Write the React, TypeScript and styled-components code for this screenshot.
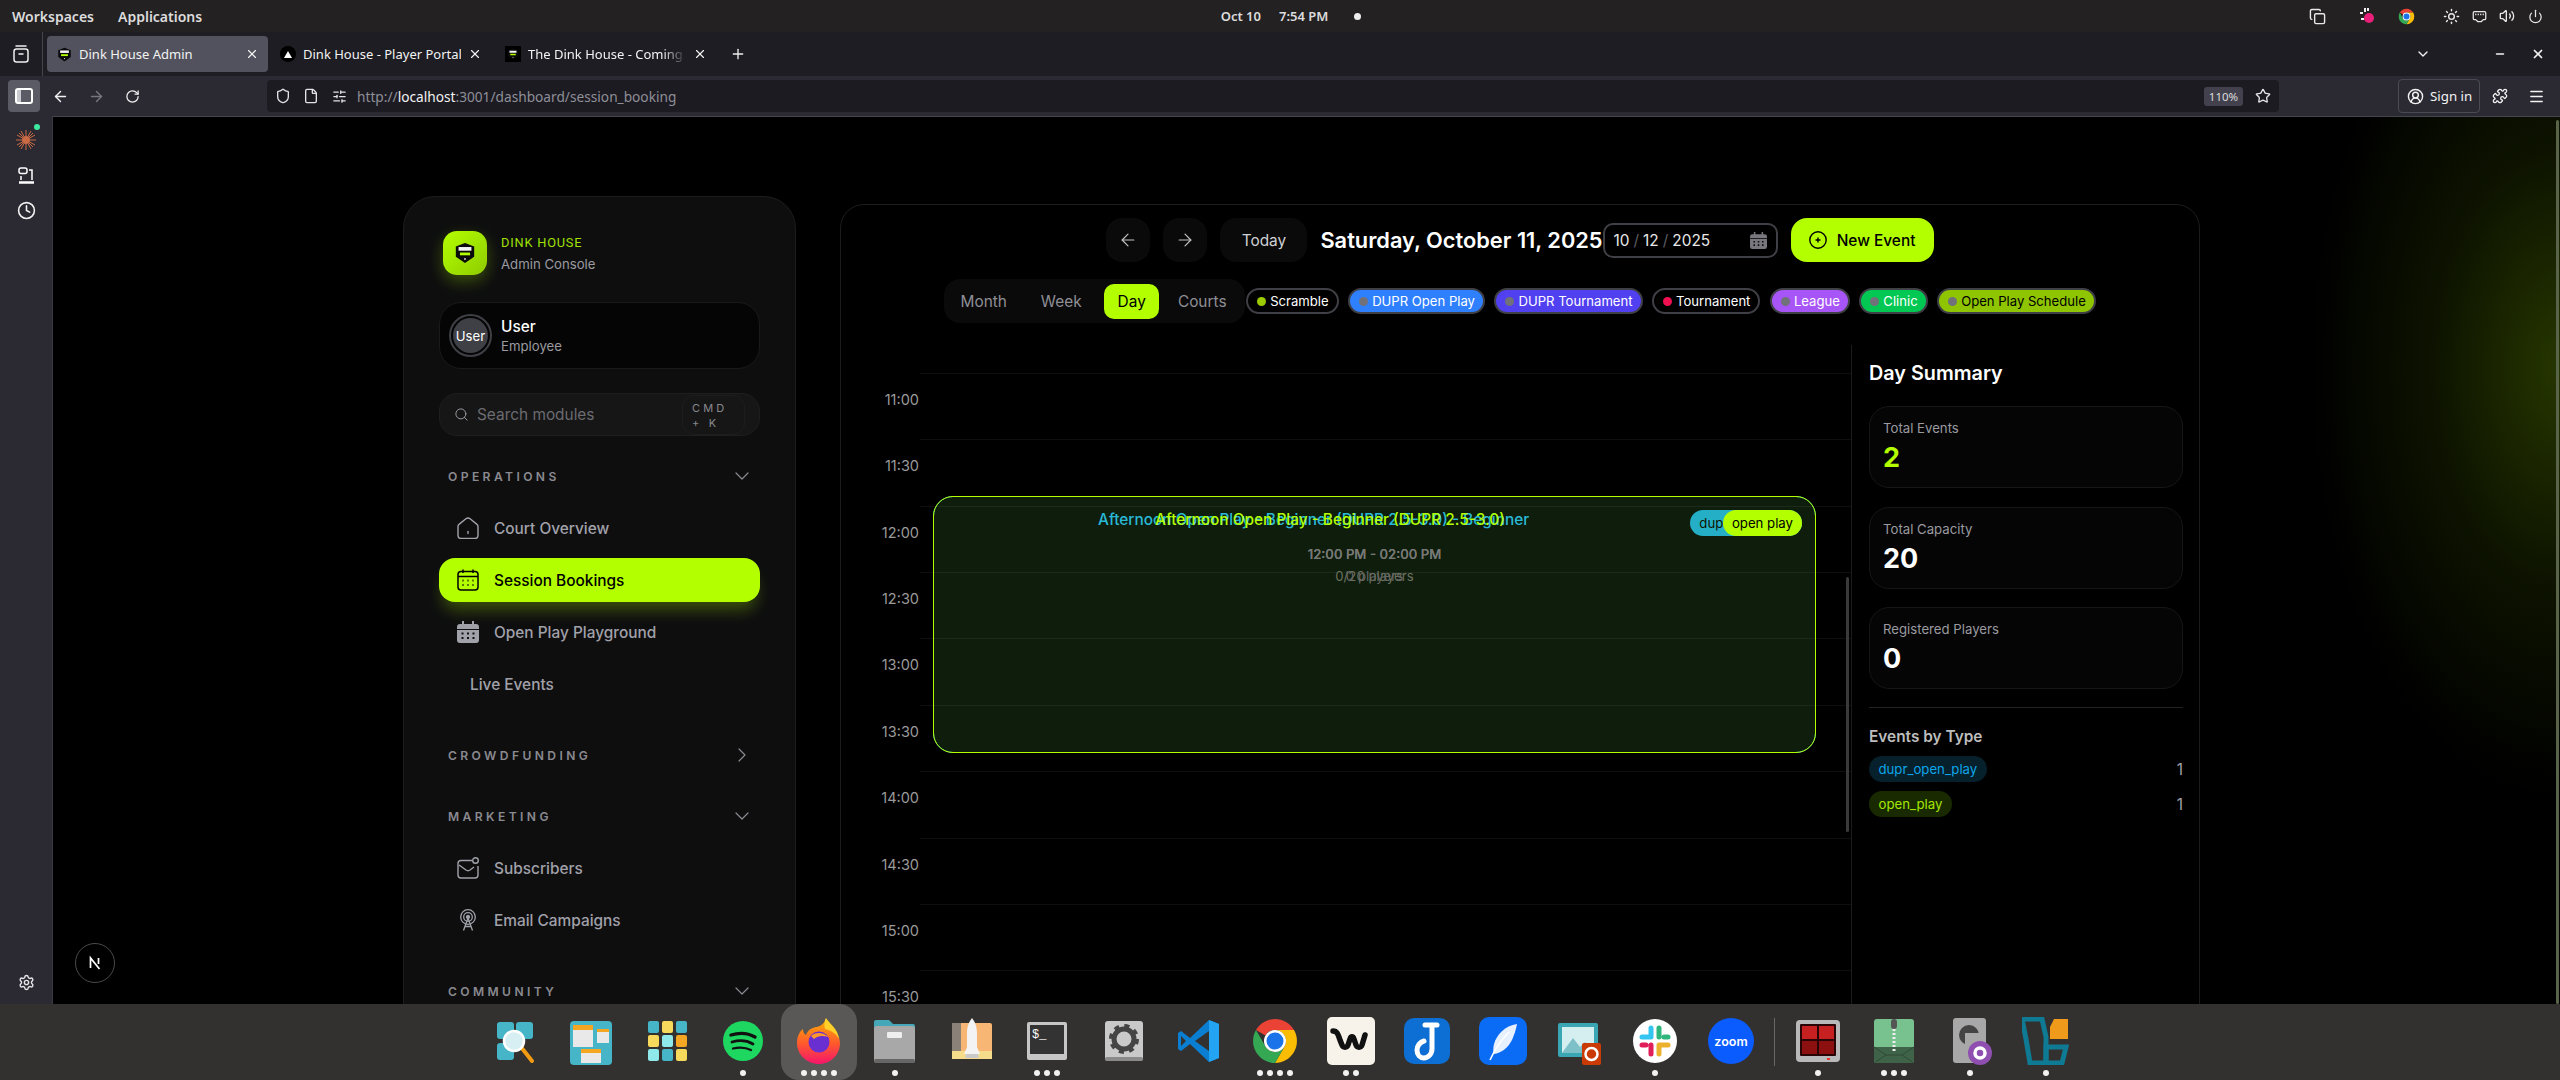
import React from 'react'
import styled, { createGlobalStyle } from 'styled-components'
import {
  ArrowLeft,
  ArrowRight,
  ChevronDown,
  ChevronRight,
  CircleUserRound,
  Clock,
  Copy,
  EthernetPort,
  File,
  Menu,
  Minus,
  Plus,
  Power,
  Puzzle,
  RotateCw,
  Search,
  Settings,
  Shield,
  SlidersHorizontal,
  Star,
  Sun,
  Volume2,
  X,
} from 'lucide-react'

const LIME = '#b3ff00'

const GlobalStyle = createGlobalStyle`
  html, body {
    margin: 0;
    padding: 0;
    background: #000;
    overflow: hidden;
  }
  * {
    box-sizing: border-box;
  }
`

/* ---------- small drawings ---------- */

const LogoMark = ({ size = 22 }: { size?: number }) => (
  <svg width={size} height={size} viewBox="0 0 24 24">
    <path d="M12 1l10 4v11l-10 7-10-7V5z" fill="#0b0b0b" />
    <rect x="5" y="5.500" width="14" height="4" fill="#f4f4f4" />
    <rect x="6.500" y="11.500" width="11" height="3" fill={LIME} />
    <circle cx="12" cy="18.500" r="1" fill="#ddd" />
  </svg>
)

const HouseIcon = () => (
  <svg width="22" height="22" viewBox="0 0 22 22" fill="none" stroke="#a1a1aa" strokeWidth="1.4">
    <path d="M1 9.500c0-1 .5-1.800 1.300-2.400l6.600-5.300c1.200-1 3-1 4.200 0l6.600 5.300c.8.600 1.300 1.400 1.300 2.400v9c0 1.700-1.300 3-3 3H4c-1.700 0-3-1.300-3-3z" />
    <path d="M11 14.500v2" strokeLinecap="round" />
  </svg>
)

const CalendarOutline = () => (
  <svg width="22" height="22" viewBox="0 0 22 22" fill="none" stroke="#000" strokeWidth="1.500">
    <rect x="1" y="2.500" width="20" height="18.500" rx="3" />
    <path d="M1 7.500h20M6 .500v3.500M16 .500v3.500" />
    <path d="M5.500 11.500h1M10.500 11.500h1M15.500 11.500h1M5.500 16h1M10.500 16h1M15.500 16h1" strokeWidth="2" />
  </svg>
)

const CalendarFilled = ({ size = 22, color = '#a1a1aa' }: { size?: number; color?: string }) => (
  <svg width={size} height={size} viewBox="0 0 22 22">
    <path d="M5 0h2v3h8V0h2v3h2a3 3 0 0 1 3 3v2H0V6a3 3 0 0 1 3-3h2z" fill={color} />
    <path d="M0 9h22v10a3 3 0 0 1-3 3H3a3 3 0 0 1-3-3z" fill={color} />
    <path d="M4.500 12.500h2M10 12.500h2M15.500 12.500h2M4.500 17h2M10 17h2M15.500 17h2" stroke="#0e0e0f" strokeWidth="2" />
  </svg>
)

const MailBadgeIcon = () => (
  <svg width="22" height="22" viewBox="0 0 22 22" fill="none" stroke="#a1a1aa" strokeWidth="1.4">
    <path d="M15 3.500H4a3 3 0 0 0-3 3V18a3 3 0 0 0 3 3h14a3 3 0 0 0 3-3V9" />
    <path d="M2 8l7 5c1.200.8 2.800.8 4 0l4-3" />
    <circle cx="18.500" cy="3.500" r="2.800" />
  </svg>
)

const AntennaIcon = () => (
  <svg width="22" height="22" viewBox="0 0 22 22" fill="none" stroke="#a1a1aa" strokeWidth="1.300">
    <circle cx="11" cy="8" r="7.300" />
    <circle cx="11" cy="8" r="4.300" />
    <circle cx="11" cy="8" r="1.500" fill="#a1a1aa" />
    <path d="M11 9l-4.500 12.500M11 9l4.500 12.500M8 17.500h6" />
  </svg>
)

const ChromeIcon = ({ size = 48 }: { size?: number }) => (
  <svg width={size} height={size} viewBox="0 0 48 48">
    <path d="M5 13A22 22 0 0 1 43 13H24A11 11 0 0 0 14.500 18.500z" fill="#ea4335" />
    <path d="M43 13A22 22 0 0 1 24 46L33.500 29.500A11 11 0 0 0 24 13z" fill="#fbbc04" />
    <path d="M24 46A22 22 0 0 1 5 13L14.500 29.500A11 11 0 0 0 33.500 29.500z" fill="#34a853" />
    <circle cx="24" cy="24" r="11" fill="#fff" />
    <circle cx="24" cy="24" r="8.500" fill="#1a73e8" />
  </svg>
)

const NextLogo = () => (
  <svg width="16" height="16" viewBox="0 0 16 16" fill="none" stroke="#fff" strokeWidth="1.700">
    <path d="M3.500 13V3l9 11" />
    <path d="M11.500 3v6" />
  </svg>
)

/* ---------- dock drawings ---------- */

const DockSvg = ({ children }: { children: React.ReactNode }) => (
  <svg width="48" height="48" viewBox="0 0 48 48">
    {children}
  </svg>
)

const dockIcons: { key: string; dots: number; art: React.ReactNode }[] = [
  {
    key: 'finder',
    dots: 0,
    art: (
      <DockSvg>
        <rect x="6" y="5" width="17" height="17" rx="3" fill="#45b5c7" />
        <rect x="25" y="5" width="17" height="17" rx="3" fill="#45b5c7" />
        <rect x="6" y="26" width="17" height="17" rx="3" fill="#45b5c7" />
        <path d="M30 30l11 14" stroke="#f39c12" strokeWidth="4" strokeLinecap="round" />
        <circle cx="23" cy="24" r="10" fill="#d7eef2" stroke="#fff" strokeWidth="2.500" />
      </DockSvg>
    ),
  },
  {
    key: 'board',
    dots: 0,
    art: (
      <DockSvg>
        <rect x="3" y="4" width="42" height="44" rx="4" fill="#45b5c7" />
        <rect x="6" y="8" width="20" height="22" fill="#e9e9e9" />
        <rect x="6" y="8" width="20" height="5" fill="#f5a623" />
        <rect x="30" y="12" width="12" height="14" fill="#e9e9e9" />
        <rect x="30" y="12" width="12" height="3" fill="#f5a623" />
        <rect x="14" y="32" width="20" height="14" fill="#e9e9e9" />
        <rect x="14" y="32" width="20" height="4" fill="#f5a623" />
      </DockSvg>
    ),
  },
  {
    key: 'apps',
    dots: 0,
    art: (
      <DockSvg>
        {['#45b5c7', '#f7d95c', '#45b5c7', '#f7d95c', '#8fe9ea', '#f5a623', '#8fe9ea', '#45b5c7', '#f7d95c'].map((c, i) => (
          <rect key={i} x={5 + (i % 3) * 14} y={4 + Math.floor(i / 3) * 14} width="11" height="12" rx="2" fill={c} />
        ))}
      </DockSvg>
    ),
  },
  {
    key: 'spotify',
    dots: 1,
    art: (
      <DockSvg>
        <circle cx="24" cy="24" r="20" fill="#1ed760" />
        <g fill="none" stroke="#111" strokeLinecap="round">
          <path d="M12 18c8-2.500 17-2 24 2" strokeWidth="3.400" />
          <path d="M13 25c7-2 15-1.500 21 2" strokeWidth="2.800" />
          <path d="M14 31.500c6-1.500 13-1 18 1.500" strokeWidth="2.300" />
        </g>
      </DockSvg>
    ),
  },
  {
    key: 'firefox',
    dots: 4,
    art: (
      <DockSvg>
        <defs>
          <linearGradient id="ff" x1="0" y1="0" x2="0" y2="1">
            <stop offset="0" stopColor="#ffb300" />
            <stop offset="0.55" stopColor="#ff5a2c" />
            <stop offset="1" stopColor="#f5156c" />
          </linearGradient>
        </defs>
        <path d="M31 1c-1 7 14 12 14 25 0 12-9.500 21-21 21S2 38 2 26C2 19 5 14 8 12c0 3 1 5 3 6 2-6 8-8 11-8 4-1 8-4 9-9z" fill="url(#ff)" />
        <path d="M31 1c4 6 12 11 13 21-3-6-9-9-14-10-1-4-1-7 1-11z" fill="#ffd02a" />
        <circle cx="24" cy="25" r="10.500" fill="#6a2fd0" />
        <path d="M16 19c4-4 13-4 17 1-5-2-11-1-14 2z" fill="#ff9a2a" />
      </DockSvg>
    ),
  },
  {
    key: 'files',
    dots: 1,
    art: (
      <DockSvg>
        <path d="M3 5a2 2 0 0 1 2-2h13l4 4h20a2 2 0 0 1 2 2v3H3z" fill="#45a8b8" />
        <rect x="3" y="9" width="41" height="37" rx="3" fill="#a8a8a8" />
        <rect x="3" y="42" width="41" height="4" rx="2" fill="#666" />
        <rect x="16" y="15" width="15" height="6" rx="1" fill="#eee" />
      </DockSvg>
    ),
  },
  {
    key: 'rocket',
    dots: 0,
    art: (
      <DockSvg>
        <rect x="5" y="6" width="40" height="36" rx="2" fill="#f7b673" />
        <rect x="5" y="6" width="9" height="36" fill="#8a8178" />
        <rect x="5" y="34" width="40" height="8" fill="#f5dc8a" />
        <path d="M25 1c4 5 5 10 5 16v13l3 7H17l3-7V17c0-6 1-11 5-16z" fill="#f3f3f3" />
        <path d="M19 37h12l1 4H18z" fill="#c9c9c9" />
      </DockSvg>
    ),
  },
  {
    key: 'terminal',
    dots: 3,
    art: (
      <DockSvg>
        <rect x="4" y="5" width="40" height="38" rx="2" fill="#c6c6c6" />
        <rect x="7" y="8" width="34" height="29" fill="#333" />
        <text x="9" y="21" fontFamily="'Liberation Mono', monospace" fontSize="12" fill="#fff">$_</text>
      </DockSvg>
    ),
  },
  {
    key: 'settings',
    dots: 0,
    art: (
      <DockSvg>
        <rect x="6" y="4" width="38" height="40" rx="3" fill="#c9c9c9" />
        <rect x="6" y="40" width="38" height="4" rx="2" fill="#8a8a8a" />
        <circle cx="25" cy="22" r="10" fill="none" stroke="#444" strokeWidth="5" />
        <circle cx="25" cy="22" r="13" fill="none" stroke="#444" strokeWidth="4" strokeDasharray="5 5.200" />
      </DockSvg>
    ),
  },
  {
    key: 'vscode',
    dots: 0,
    art: (
      <DockSvg>
        <path d="M34 3L15 21 6 14l-3 2v16l3 2 9-7 19 18 10-4V7z" fill="#0a7fd1" />
        <path d="M34 3l10 4v34l-10 4z" fill="#22a4f2" />
        <path d="M34 14v20L20 24z" fill="#333030" />
        <path d="M6 19l5 5-5 5z" fill="#333030" />
      </DockSvg>
    ),
  },
  { key: 'chrome', dots: 4, art: <ChromeIcon /> },
  {
    key: 'wave',
    dots: 2,
    art: (
      <DockSvg>
        <rect x="0" y="0" width="48" height="48" rx="5" fill="#f8f3ea" />
        <path d="M6 14c4 0 5 3 7 9l2 5c1 3 5 3 6 0l2-6c1-3 3-3 4 0l2 6c1 3 5 3 6 0l3-10" fill="none" stroke="#111" strokeWidth="5.500" strokeLinecap="round" />
      </DockSvg>
    ),
  },
  {
    key: 'joplin',
    dots: 0,
    art: (
      <DockSvg>
        <rect x="1" y="1" width="46" height="46" rx="10" fill="#0d6fd4" />
        <path d="M22 8h12M29 8v24c0 5-4 9-8 9s-7-3-7-8c0-4 3-8 7-9" fill="none" stroke="#fff" strokeWidth="5" strokeLinecap="round" />
      </DockSvg>
    ),
  },
  {
    key: 'feather',
    dots: 0,
    art: (
      <DockSvg>
        <rect x="0" y="0" width="48" height="48" rx="10" fill="#0a6cf5" />
        <path d="M38 7c-12 2-20 10-23 20-1 4-1 8 0 10 7-1 14-6 18-14 2-5 4-10 5-16z" fill="#e6f0ff" />
        <path d="M30 15C22 23 16 32 11 43" fill="none" stroke="#fff" strokeWidth="1.600" />
      </DockSvg>
    ),
  },
  {
    key: 'viewer',
    dots: 0,
    art: (
      <DockSvg>
        <rect x="3" y="6" width="40" height="34" rx="2" fill="#3aa6b3" />
        <rect x="7" y="10" width="32" height="26" fill="#d5eef0" />
        <path d="M7 36l11-15 7 9 5-5 9 11z" fill="#7dc0c8" />
        <rect x="27" y="26" width="19" height="22" rx="2" fill="#c93a05" />
        <circle cx="36.500" cy="37" r="6" fill="none" stroke="#fff" strokeWidth="2.500" />
      </DockSvg>
    ),
  },
  {
    key: 'slack',
    dots: 1,
    art: (
      <DockSvg>
        <circle cx="24" cy="24" r="22" fill="#fff" />
        <g strokeWidth="5" strokeLinecap="round">
          <path d="M20 11v9M11 20h9" stroke="#36c5f0" />
          <path d="M28 11v9M37 20h-4" stroke="#2eb67d" />
          <path d="M28 37v-9M37 28h-9" stroke="#ecb22e" />
          <path d="M20 37v-9M11 28h4" stroke="#e01e5a" />
        </g>
      </DockSvg>
    ),
  },
  {
    key: 'zoom',
    dots: 0,
    art: (
      <DockSvg>
        <circle cx="24" cy="24" r="23" fill="#0b5cff" />
        <text x="24" y="28.500" textAnchor="middle" fontFamily="Inter, sans-serif" fontSize="12.500" fontWeight="600" fill="#fff">zoom</text>
      </DockSvg>
    ),
  },
]

const dockExtras: { key: string; dots: number; art: React.ReactNode }[] = [
  {
    key: 'tilix',
    dots: 1,
    art: (
      <DockSvg>
        <rect x="2" y="3" width="44" height="42" rx="4" fill="#b9b9b9" />
        <rect x="6" y="7" width="36" height="32" rx="1" fill="#2a0505" />
        <rect x="8" y="9" width="15" height="13" fill="#c62020" />
        <rect x="25" y="9" width="15" height="13" fill="#c62020" />
        <rect x="8" y="24" width="15" height="13" fill="#8c1010" />
        <rect x="25" y="24" width="15" height="13" fill="#8c1010" />
        <rect x="33" y="41" width="3" height="2" fill="#e33" />
      </DockSvg>
    ),
  },
  {
    key: 'archive',
    dots: 3,
    art: (
      <DockSvg>
        <rect x="4" y="2" width="40" height="44" rx="3" fill="#78c28f" />
        <path d="M4 30h40v13a3 3 0 0 1-3 3H7a3 3 0 0 1-3-3z" fill="#3f6349" />
        <path d="M4 30l12 8h16l12-8M4 46l12-8M44 46l-12-8" fill="none" stroke="#2f4a37" strokeWidth="1" />
        <rect x="21" y="2" width="6" height="10" rx="3" fill="#555" />
        <path d="M24 12v24" stroke="#eee" strokeWidth="3" strokeDasharray="2 2" />
      </DockSvg>
    ),
  },
  {
    key: 'disk',
    dots: 1,
    art: (
      <DockSvg>
        <rect x="7" y="1" width="33" height="45" rx="3" fill="#a8a8a8" />
        <circle cx="23" cy="18" r="10" fill="#444" />
        <rect x="19" y="16" width="14" height="26" fill="#a8a8a8" />
        <circle cx="34" cy="36" r="12" fill="#8e4fb0" />
        <circle cx="34" cy="36" r="5" fill="none" stroke="#fff" strokeWidth="3.500" />
      </DockSvg>
    ),
  },
  {
    key: 'vb',
    dots: 1,
    art: (
      <DockSvg>
        <path d="M0 2h20l4 18v26H8L4 22z" fill="none" stroke="#0f7a94" strokeWidth="5" />
        <path d="M28 10l4-8h14v20H28z" fill="#f09a1c" />
        <path d="M24 30h20l-4 16H24z" fill="none" stroke="#0f7a94" strokeWidth="5" />
      </DockSvg>
    ),
  },
]

/* ---------- window chrome ---------- */

const Screen = styled.div`
  width: 2560px;
  height: 1080px;
  display: flex;
  flex-direction: column;
  overflow: hidden;
  font-family: Inter, 'Liberation Sans', sans-serif;
  color: #fff;
`

const TopBar = styled.div`
  height: 32px;
  flex-shrink: 0;
  background: #232122;
  display: grid;
  grid-template-columns: 1fr auto 1fr;
  align-items: center;
  font-family: 'Noto Sans', sans-serif;
  font-size: 14px;
  font-weight: 600;
  color: #dcdcdc;
  padding: 0 12px;
`

const TopLeft = styled.div`
  display: flex;
  gap: 24px;
`

const Clockface = styled.div`
  display: flex;
  align-items: center;
  gap: 18px;
  font-size: 13px;
  margin-left: 22px;
`

const RecordDot = styled.span`
  width: 7px;
  height: 7px;
  border-radius: 50%;
  background: #eee;
  margin-left: 8px;
`

const Tray = styled.div`
  display: flex;
  justify-content: flex-end;
  align-items: center;
  margin-right: -1px;
`

const TraySlot = styled.div<{ $ml?: number }>`
  width: 28px;
  margin-left: ${p => p.$ml ?? 0}px;
  display: flex;
  justify-content: center;
  color: #e8e8e8;
`

const TabStrip = styled.div`
  height: 44px;
  flex-shrink: 0;
  background: #1d1d23;
  display: flex;
  align-items: center;
  font-family: 'Noto Sans', sans-serif;
  font-size: 13px;
  color: #f2f2f2;
`

const TabRailCell = styled.div`
  width: 43px;
  height: 44px;
  border-right: 1px solid #45454d;
  display: flex;
  align-items: center;
  justify-content: center;
  margin-right: 4px;
  color: #e8e8e8;
`

const Tab = styled.div<{ $active?: boolean; $w: number; $ml?: number }>`
  width: ${p => p.$w}px;
  height: 36px;
  margin-left: ${p => p.$ml ?? 0}px;
  border-radius: 4px;
  background: ${p => (p.$active ? '#52525e' : 'transparent')};
  display: flex;
  align-items: center;
  gap: 7px;
  padding: 0 9px;
  flex-shrink: 0;
  svg {
    flex-shrink: 0;
  }
`

const TabTitle = styled.span<{ $fade?: boolean }>`
  flex: 1;
  white-space: nowrap;
  overflow: hidden;
  mask-image: ${p => (p.$fade ? 'linear-gradient(to right, #000 85%, transparent)' : 'none')};
`

const TabFavicon = styled.span<{ $tone: string }>`
  width: 16px;
  height: 16px;
  flex-shrink: 0;
  display: flex;
  align-items: center;
  justify-content: center;
  background: ${p => p.$tone};
  border-radius: ${p => (p.$tone === '#000' ? '50%' : '0')};
`

const SquareFavicon = styled(TabFavicon)`
  border-radius: 0;
`

const Triangle = styled.span`
  width: 0;
  height: 0;
  border-left: 4px solid transparent;
  border-right: 4px solid transparent;
  border-bottom: 7px solid #fff;
`

const NewTab = styled.div`
  margin-left: 14px;
  display: flex;
  color: #eee;
`

const WindowButtons = styled.div`
  margin-left: auto;
  display: flex;
  align-items: center;
  padding-right: 7px;
  color: #f2f2f2;
`

const WindowSlot = styled.div<{ $ml?: number }>`
  width: 30px;
  margin-left: ${p => p.$ml ?? 0}px;
  display: flex;
  justify-content: center;
  flex-shrink: 0;
`

const Toolbar = styled.div`
  height: 40px;
  flex-shrink: 0;
  background: #2b2a33;
  display: flex;
  align-items: center;
  font-family: 'Noto Sans', sans-serif;
  color: #f2f2f2;
`

const ToolButton = styled.div<{ $active?: boolean; $dim?: boolean; $w?: number }>`
  width: ${p => p.$w ?? 36}px;
  height: 32px;
  border-radius: 4px;
  display: flex;
  align-items: center;
  justify-content: center;
  flex-shrink: 0;
  background: ${p => (p.$active ? '#5b5b66' : 'transparent')};
  color: ${p => (p.$dim ? '#77767e' : '#f2f2f2')};
`

const RailToggle = styled(ToolButton)`
  margin: 0 2px 0 8px;
`

const SidebarGlyph = styled.span`
  width: 18px;
  height: 16px;
  border: 2px solid #fff;
  border-radius: 3px;
  background: linear-gradient(to right, #c9c9d0 0 4px, transparent 4px);
`

const UrlBar = styled.div`
  margin-left: 117px;
  width: 2012px;
  height: 32px;
  border-radius: 4px;
  background: #1c1b22;
  display: flex;
  align-items: center;
  padding: 0 2px;
  font-size: 13.7px;
  color: #8f8f98;
`

const UrlIcon = styled.span`
  width: 28px;
  display: flex;
  justify-content: center;
  color: #e4e4e8;
  flex-shrink: 0;
`

const UrlText = styled.div`
  margin-left: 4px;
  flex: 1;
  white-space: nowrap;
  b {
    font-weight: 400;
    color: #f2f2f2;
  }
`

const ZoomBadge = styled.span`
  width: 39px;
  height: 19px;
  margin-right: 6px;
  border-radius: 3px;
  background: #42414d;
  font-size: 11.5px;
  display: flex;
  align-items: center;
  justify-content: center;
  color: #ddd;
`

const SignIn = styled.div`
  margin-left: 119px;
  width: 82px;
  height: 34px;
  border: 1px solid #4a4a55;
  border-radius: 4px;
  display: flex;
  align-items: center;
  gap: 6px;
  padding-left: 8px;
  font-size: 13.3px;
`

const Body = styled.div`
  flex: 1;
  display: flex;
  min-height: 0;
`

const SideRail = styled.div`
  width: 52px;
  flex-shrink: 0;
  background: #2b2a33;
  display: flex;
  flex-direction: column;
  align-items: center;
  color: #f2f2f2;
  padding-top: 14px;
  gap: 17px;
`

const RailSpark = styled.div`
  position: relative;
  width: 20px;
  height: 20px;
`

const RailDot = styled.span`
  position: absolute;
  right: -4px;
  top: -6px;
  width: 6px;
  height: 6px;
  border-radius: 50%;
  background: #3de8a0;
`

const RailSpacer = styled.div`
  flex: 1;
`

const RailBottom = styled.div`
  display: flex;
  color: #e4e4e8;
  margin-bottom: 13px;
`

const Viewport = styled.div`
  position: relative;
  flex: 1;
  min-width: 0;
  overflow: hidden;
  border-top: 1px solid #45454f;
  border-left: 1px solid #3a3a44;
  background:
    radial-gradient(ellipse 250px 430px at 100% 250px, rgba(140, 200, 0, 0.27), rgba(120, 175, 0, 0.11) 50%, transparent 100%),
    #000;
  display: flex;
  align-items: flex-start;
  gap: 44px;
  padding: 79px 0 0 350px;
`

const PageScroll = styled.span`
  position: absolute;
  right: 1px;
  top: 3px;
  bottom: 0;
  width: 3px;
  background: #59634a;
  border-radius: 2px;
`

const NextBadge = styled.div`
  position: absolute;
  left: 22px;
  bottom: 21px;
  width: 40px;
  height: 40px;
  border-radius: 50%;
  background: #000;
  border: 1px solid #4a4a4a;
  display: flex;
  align-items: center;
  justify-content: center;
`

/* ---------- sidebar ---------- */

const SidePanel = styled.aside`
  width: 393px;
  height: 920px;
  flex-shrink: 0;
  background: #0e0e0f;
  border: 1px solid #1c1c1e;
  border-radius: 32px;
  padding: 34px 35px 0;
  display: flex;
  flex-direction: column;
`

const Brand = styled.div`
  display: flex;
  align-items: center;
  gap: 14px;
  padding-left: 4px;
  height: 44px;
`

const BrandTile = styled.div`
  width: 44px;
  height: 44px;
  border-radius: 14px;
  background: linear-gradient(135deg, #b3ff00, #8fcc00);
  box-shadow: 0 6px 16px rgba(179, 255, 0, 0.28);
  display: flex;
  align-items: center;
  justify-content: center;
`

const BrandName = styled.div`
  font-family: Roboto, sans-serif;
  font-size: 12.8px;
  letter-spacing: 0.8px;
  color: #9fe000;
  line-height: 18px;
  margin-top: 1px;
`

const MutedSmall = styled.div`
  font-size: 13.2px;
  color: #9a9aa0;
  line-height: 18px;
`

const BrandSub = styled(MutedSmall)`
  margin-top: 3px;
`

const UserCard = styled.div`
  margin-top: 27px;
  height: 67px;
  border-radius: 22px;
  background: #050505;
  border: 1px solid #1a1a1c;
  display: flex;
  align-items: center;
  gap: 9px;
  padding-left: 9px;
`

const Avatar = styled.div`
  width: 43px;
  height: 43px;
  border-radius: 50%;
  border: 2px solid #3f3f46;
  padding: 2px;
  flex-shrink: 0;
`

const AvatarFace = styled.div`
  width: 100%;
  height: 100%;
  border-radius: 50%;
  background: #3f3f46;
  font-size: 13.2px;
  display: flex;
  align-items: center;
  justify-content: center;
`

const UserName = styled.div`
  font-size: 15.4px;
  font-weight: 500;
  line-height: 20px;
`

const SearchBox = styled.div`
  margin: 24px 0 28px;
  height: 43px;
  border-radius: 18px;
  background: #161617;
  border: 1px solid #1e1e20;
  display: flex;
  align-items: center;
  padding-left: 14px;
  gap: 8px;
  color: #a1a1aa;
`

const SearchHint = styled.div`
  flex: 1;
  font-size: 15.4px;
  color: #6b6b70;
`

const Kbd = styled.div`
  width: 63px;
  height: 40px;
  margin-right: 14px;
  border: 1px solid #1d1d1f;
  border-radius: 12px;
  padding: 5px 0 0 9px;
  font-size: 11px;
  line-height: 15px;
  letter-spacing: 3.2px;
  color: #88888e;
`

const Sections = styled.div`
  display: flex;
  flex-direction: column;
  gap: 37px;
`

const Section = styled.section`
  display: flex;
  flex-direction: column;
  gap: 18px;
`

const SectionHead = styled.div`
  height: 24px;
  display: flex;
  align-items: center;
  justify-content: space-between;
  padding: 0 6px 0 9px;
  font-size: 12.1px;
  font-weight: 600;
  letter-spacing: 3.4px;
  color: #8a8a90;
  svg {
    color: #8a8a90;
  }
`

const NavList = styled.nav`
  display: flex;
  flex-direction: column;
  gap: 8px;
`

const NavRow = styled.a<{ $active?: boolean; $bare?: boolean }>`
  height: 44px;
  border-radius: 16px;
  display: flex;
  align-items: center;
  gap: 15px;
  padding-left: ${p => (p.$bare ? 31 : 18)}px;
  font-size: 15.4px;
  font-weight: 500;
  color: ${p => (p.$active ? '#000' : '#a1a1aa')};
  background: ${p => (p.$active ? LIME : 'transparent')};
  box-shadow: ${p => (p.$active ? '0 12px 16px -4px rgba(179, 255, 0, 0.28)' : 'none')};
`

const NavIcon = styled.span`
  width: 22px;
  height: 22px;
  display: flex;
  justify-content: center;
  color: #a1a1aa;
`

/* ---------- calendar ---------- */

const CalendarPanel = styled.main`
  width: 1360px;
  height: 920px;
  flex-shrink: 0;
  margin-top: 8px;
  border: 1px solid #1c1c1e;
  border-radius: 24px;
  background: #000;
  display: flex;
  flex-direction: column;
  padding-top: 13px;
`

const HeadRow = styled.div`
  display: flex;
  justify-content: center;
  align-items: center;
  gap: 13px;
  height: 44px;
`

const IconBtn = styled.button`
  width: 44px;
  height: 44px;
  border: 0;
  border-radius: 16px;
  background: #0a0a0a;
  color: #c4c4c8;
  display: flex;
  align-items: center;
  justify-content: center;
  padding: 0;
`

const TodayBtn = styled(IconBtn)`
  width: 87px;
  font-family: inherit;
  font-size: 15.4px;
  color: #d0d0d4;
`

const DayTitle = styled.h1`
  margin: 0 -13px 0 0;
  font-size: 21.8px;
  font-weight: 600;
  white-space: nowrap;
`

const DateField = styled.div`
  width: 175px;
  height: 35px;
  border: 2px solid #3f3f46;
  border-radius: 10px;
  display: flex;
  align-items: center;
  gap: 4px;
  padding: 0 9px;
  font-size: 15.4px;
  color: #e8e8e8;
  span.sep {
    color: #5c5c62;
  }
  svg {
    margin-left: auto;
  }
`

const NewEventBtn = styled.button`
  width: 143px;
  height: 44px;
  border: 0;
  border-radius: 16px;
  background: ${LIME};
  color: #000;
  font-family: inherit;
  font-size: 15.4px;
  font-weight: 500;
  display: flex;
  align-items: center;
  justify-content: center;
  gap: 10px;
`

const FilterRow = styled.div`
  margin-top: 17px;
  height: 44px;
  display: flex;
  justify-content: center;
  align-items: center;
`

const ViewTabs = styled.div`
  width: 301px;
  height: 44px;
  border-radius: 16px;
  background: #0a0a0a;
  display: flex;
  align-items: center;
  padding-left: 5px;
  margin-right: 1px;
`

const ViewTab = styled.div<{ $active?: boolean; $w: number }>`
  width: ${p => p.$w}px;
  flex-shrink: 0;
  height: 35px;
  border-radius: 10px;
  font-size: 15.4px;
  display: flex;
  align-items: center;
  justify-content: center;
  color: ${p => (p.$active ? '#000' : '#8f8f96')};
  background: ${p => (p.$active ? LIME : 'transparent')};
`

const Chips = styled.div`
  display: flex;
  gap: 9.500px;
`

const Chip = styled.div<{ $bg: string; $fg: string }>`
  height: 26px;
  border: 2px solid #3f3f46;
  border-radius: 13px;
  background: ${p => p.$bg};
  color: ${p => p.$fg};
  display: flex;
  align-items: center;
  gap: 4px;
  padding: 0 8px 0 9px;
  font-size: 13.100px;
  white-space: nowrap;
`

const ChipDot = styled.span<{ $c: string }>`
  width: 9px;
  height: 9px;
  border-radius: 50%;
  background: ${p => p.$c};
`

const CalendarBody = styled.div`
  margin-top: 22px;
  flex: 1;
  display: flex;
  min-height: 0;
`

const GridArea = styled.div`
  position: relative;
  flex: 1;
  overflow: hidden;
`

const GridTrack = styled.div`
  margin-top: -37.500px;
`

const TimeRow = styled.div`
  height: 66.400px;
  display: flex;
`

const TimeLabel = styled.div`
  width: 78px;
  padding-top: 16px;
  text-align: right;
  font-size: 14.500px;
  line-height: 20px;
  color: #9a9a9a;
`

const Slot = styled.div`
  flex: 1;
  margin-left: 1px;
  border-bottom: 1px solid rgba(255, 255, 255, 0.06);
`

const EventCard = styled.div<{ $tone: 'blue' | 'lime' }>`
  position: absolute;
  left: 92px;
  top: 151px;
  width: 883px;
  height: 257px;
  border-radius: 20px;
  border: 1.500px solid ${p => (p.$tone === 'lime' ? LIME : '#1aa9d8')};
  background: ${p => (p.$tone === 'lime' ? 'rgba(179, 255, 0, 0.08)' : 'rgba(14, 165, 233, 0.06)')};
  padding: 12.500px 13px 0 3px;
  text-align: center;
`

const EventTop = styled.div`
  display: flex;
  align-items: flex-start;
`

const EventTitle = styled.div<{ $tone: 'blue' | 'lime' }>`
  flex: 1;
  font-size: 15.400px;
  font-weight: 500;
  line-height: 20px;
  color: ${p => (p.$tone === 'lime' ? LIME : '#1fb4e6')};
`

const EventTag = styled.span<{ $tone: 'blue' | 'lime' }>`
  height: 26px;
  border-radius: 13px;
  padding: 0 9px;
  font-size: 13.200px;
  display: flex;
  align-items: center;
  color: #000;
  background: ${p => (p.$tone === 'lime' ? LIME : '#1aa9d8')};
`

const EventTime = styled.div`
  margin-top: 9px;
  padding-left: 10px;
  font-size: 13.200px;
  font-weight: 500;
  line-height: 18px;
  color: #777;
`

const EventPlayers = styled(EventTime)`
  margin-top: 4px;
  font-weight: 400;
  color: #666;
`

const GridScroll = styled.span`
  position: absolute;
  right: 2px;
  top: 232px;
  width: 3px;
  height: 255px;
  background: #3a3a3a;
  border-radius: 2px;
`

const SummaryPanel = styled.div`
  width: 348px;
  flex-shrink: 0;
  border-left: 1px solid #1c1c1e;
  padding: 14px 16px 0 17px;
`

const SummaryTitle = styled.h2`
  margin: 0 0 19px;
  font-size: 19.800px;
  font-weight: 600;
  line-height: 28px;
`

const StatList = styled.div`
  display: flex;
  flex-direction: column;
  gap: 18.500px;
`

const StatCard = styled.div`
  height: 82px;
  border-radius: 20px;
  background: #050505;
  border: 1px solid #161618;
  padding: 12px 13px;
`

const StatValue = styled.div<{ $lime?: boolean }>`
  font-size: 27px;
  font-weight: 700;
  line-height: 32px;
  margin-top: 5px;
  color: ${p => (p.$lime ? LIME : '#fff')};
`

const Divider = styled.div`
  height: 1px;
  background: #222224;
  margin: 18px 0 19px;
`

const TypeTitle = styled.div`
  font-size: 15.400px;
  font-weight: 600;
  line-height: 20px;
  color: #bdbdbd;
  margin-bottom: 9px;
`

const TypeRow = styled.div`
  display: flex;
  align-items: center;
  justify-content: space-between;
  font-size: 15.400px;
  color: #a1a1aa;
  margin-bottom: 9px;
`

const TypePill = styled.span<{ $bg: string; $fg: string }>`
  height: 26px;
  border-radius: 13px;
  padding: 0 9.500px;
  font-size: 13.200px;
  display: flex;
  align-items: center;
  background: ${p => p.$bg};
  color: ${p => p.$fg};
`

/* ---------- dock ---------- */

const Dock = styled.div`
  height: 76px;
  flex-shrink: 0;
  background: #333030;
  display: flex;
  justify-content: center;
`

const DockItem = styled.div<{ $active?: boolean }>`
  width: 76px;
  height: 76px;
  border-radius: 18px;
  padding-top: 13px;
  display: flex;
  flex-direction: column;
  align-items: center;
  background: ${p => (p.$active ? '#5a5856' : 'transparent')};
`

const DockDots = styled.div`
  margin-top: 5px;
  display: flex;
  gap: 4px;
`

const DockDot = styled.span`
  width: 6px;
  height: 6px;
  border-radius: 50%;
  background: #f2f2f2;
`

const DockSeparator = styled.div`
  width: 1px;
  height: 48px;
  margin: 14px 5px 0 5px;
  background: #666;
`

/* ---------- data ---------- */

const chips = [
  { label: 'Scramble', bg: 'transparent', fg: '#fff', dot: '#9ccc00' },
  { label: 'DUPR Open Play', bg: '#2f80ff', fg: '#fff', dot: '#71717a' },
  { label: 'DUPR Tournament', bg: '#5040f0', fg: '#fff', dot: '#71717a' },
  { label: 'Tournament', bg: 'transparent', fg: '#fff', dot: '#f0104f' },
  { label: 'League', bg: '#a855f7', fg: '#fff', dot: '#71717a' },
  { label: 'Clinic', bg: '#00c853', fg: '#fff', dot: '#71717a' },
  { label: 'Open Play Schedule', bg: '#8fc400', fg: '#000', dot: '#71717a' },
]

const hours = ['10:30', '11:00', '11:30', '12:00', '12:30', '13:00', '13:30', '14:00', '14:30', '15:00', '15:30', '16:00', '16:30', '17:00']

const stats = [
  { label: 'Total Events', value: '2', lime: true },
  { label: 'Total Capacity', value: '20' },
  { label: 'Registered Players', value: '0' },
]

const renderDock = (item: { key: string; dots: number; art: React.ReactNode }) => (
  <DockItem key={item.key} $active={item.key === 'firefox'}>
    {item.art}
    <DockDots>
      {Array.from({ length: item.dots }).map((_, i) => (
        <DockDot key={i} />
      ))}
    </DockDots>
  </DockItem>
)

const App = () => {
  return (
    <Screen>
      <GlobalStyle />
      <TopBar>
        <TopLeft>
          <span>Workspaces</span>
          <span>Applications</span>
        </TopLeft>
        <Clockface>
          <span>Oct 10</span>
          <span>7:54 PM</span>
          <RecordDot />
        </Clockface>
        <Tray>
          <TraySlot><Copy size={17} /></TraySlot>
          <TraySlot $ml={22}>
            <svg width="16" height="18" viewBox="0 0 16 18">
              <circle cx="10" cy="11" r="5" fill="#e8207a" />
              <path d="M6 1v4M1 6h3M2 12h3M9 1v3" stroke="#eee" strokeWidth="2" />
            </svg>
          </TraySlot>
          <TraySlot $ml={11}><ChromeIcon size={17} /></TraySlot>
          <TraySlot $ml={17}><Sun size={17} /></TraySlot>
          <TraySlot><EthernetPort size={15} /></TraySlot>
          <TraySlot><Volume2 size={16} /></TraySlot>
          <TraySlot><Power size={15} /></TraySlot>
        </Tray>
      </TopBar>

      <TabStrip>
        <TabRailCell>
          <svg width="18" height="20" viewBox="0 0 18 20" fill="none" stroke="#eee" strokeWidth="1.500">
            <rect x="2" y="5" width="14" height="13" rx="2.500" />
            <path d="M4 2h10M7 10h4" strokeLinecap="round" />
          </svg>
        </TabRailCell>
        <Tab $active $w={221}>
          <TabFavicon $tone="transparent"><LogoMark size={15} /></TabFavicon>
          <TabTitle>Dink House Admin</TabTitle>
          <X size={14} />
        </Tab>
        <Tab $w={220} $ml={3}>
          <TabFavicon $tone="#000"><Triangle /></TabFavicon>
          <TabTitle>Dink House - Player Portal</TabTitle>
          <X size={14} />
        </Tab>
        <Tab $w={220} $ml={5}>
          <SquareFavicon $tone="#000"><LogoMark size={12} /></SquareFavicon>
          <TabTitle $fade>The Dink House - Coming Soon</TabTitle>
          <X size={14} />
        </Tab>
        <NewTab><Plus size={16} /></NewTab>
        <WindowButtons>
          <WindowSlot><ChevronDown size={16} /></WindowSlot>
          <WindowSlot $ml={47}><Minus size={12} strokeWidth={3} /></WindowSlot>
          <WindowSlot $ml={8}><X size={14} strokeWidth={3} /></WindowSlot>
        </WindowButtons>
      </TabStrip>

      <Toolbar>
        <RailToggle $active $w={32}><SidebarGlyph /></RailToggle>
        <ToolButton><ArrowLeft size={17} /></ToolButton>
        <ToolButton $dim><ArrowRight size={17} /></ToolButton>
        <ToolButton><RotateCw size={15} /></ToolButton>
        <UrlBar>
          <UrlIcon><Shield size={16} /></UrlIcon>
          <UrlIcon><File size={16} /></UrlIcon>
          <UrlIcon><SlidersHorizontal size={15} /></UrlIcon>
          <UrlText>
            http://<b>localhost</b>:3001/dashboard/session_booking
          </UrlText>
          <ZoomBadge>110%</ZoomBadge>
          <UrlIcon><Star size={16} /></UrlIcon>
        </UrlBar>
        <SignIn>
          <CircleUserRound size={17} />
          Sign in
        </SignIn>
        <ToolButton $w={40}><Puzzle size={16} /></ToolButton>
        <ToolButton $w={32}><Menu size={17} /></ToolButton>
      </Toolbar>

      <Body>
        <SideRail>
          <RailSpark>
            <svg width="20" height="20" viewBox="0 0 20 20" stroke="#c96a45" strokeWidth="1">
              <path d="M10 0v20M0 10h20M3 3l14 14M17 3L3 17M5 1l10 18M15 1L5 19M1 5l18 10M19 5L1 15" />
              <circle cx="10" cy="10" r="3.500" fill="#c96a45" />
            </svg>
            <RailDot />
          </RailSpark>
          <svg width="17" height="17" viewBox="0 0 17 17" fill="none" stroke="#fff" strokeWidth="1.500">
            <rect x="1" y="1" width="8" height="5.500" rx="2" />
            <path d="M11 3h3v10M3 9v4" />
            <path d="M1 15.500h15" strokeWidth="2.500" />
          </svg>
          <Clock size={19} />
          <RailSpacer />
          <RailBottom><Settings size={17} /></RailBottom>
        </SideRail>

        <Viewport>
          <SidePanel>
            <Brand>
              <BrandTile><LogoMark /></BrandTile>
              <div>
                <BrandName>DINK HOUSE</BrandName>
                <BrandSub>Admin Console</BrandSub>
              </div>
            </Brand>
            <UserCard>
              <Avatar><AvatarFace>User</AvatarFace></Avatar>
              <div>
                <UserName>User</UserName>
                <MutedSmall>Employee</MutedSmall>
              </div>
            </UserCard>
            <SearchBox>
              <Search size={15} strokeWidth={1.500} />
              <SearchHint>Search modules</SearchHint>
              <Kbd>CMD + K</Kbd>
            </SearchBox>
            <Sections>
              <Section>
                <SectionHead>OPERATIONS <ChevronDown size={24} strokeWidth={1.200} /></SectionHead>
                <NavList>
                  <NavRow><NavIcon><HouseIcon /></NavIcon>Court Overview</NavRow>
                  <NavRow $active><NavIcon><CalendarOutline /></NavIcon>Session Bookings</NavRow>
                  <NavRow><NavIcon><CalendarFilled /></NavIcon>Open Play Playground</NavRow>
                  <NavRow $bare>Live Events</NavRow>
                </NavList>
              </Section>
              <Section>
                <SectionHead>CROWDFUNDING <ChevronRight size={24} strokeWidth={1.200} /></SectionHead>
              </Section>
              <Section>
                <SectionHead>MARKETING <ChevronDown size={24} strokeWidth={1.200} /></SectionHead>
                <NavList>
                  <NavRow><NavIcon><MailBadgeIcon /></NavIcon>Subscribers</NavRow>
                  <NavRow><NavIcon><AntennaIcon /></NavIcon>Email Campaigns</NavRow>
                </NavList>
              </Section>
              <Section>
                <SectionHead>COMMUNITY <ChevronDown size={24} strokeWidth={1.200} /></SectionHead>
              </Section>
            </Sections>
          </SidePanel>

          <CalendarPanel>
            <HeadRow>
              <IconBtn><ArrowLeft size={20} strokeWidth={1.400} /></IconBtn>
              <IconBtn><ArrowRight size={20} strokeWidth={1.400} /></IconBtn>
              <TodayBtn>Today</TodayBtn>
              <DayTitle>Saturday, October 11, 2025</DayTitle>
              <DateField>
                <span>10</span><span className="sep">/</span>
                <span>12</span><span className="sep">/</span>
                <span>2025</span>
                <CalendarFilled size={17} color="#77777d" />
              </DateField>
              <NewEventBtn>
                <svg width="18" height="18" viewBox="0 0 18 18" fill="none" stroke="#000" strokeWidth="1.400">
                  <circle cx="9" cy="9" r="8.200" />
                  <path d="M9 6.500v5M6.500 9h5" />
                </svg>
                New Event
              </NewEventBtn>
            </HeadRow>
            <FilterRow>
              <ViewTabs>
                <ViewTab $w={69}>Month</ViewTab>
                <ViewTab $w={86}>Week</ViewTab>
                <ViewTab $w={55} $active>Day</ViewTab>
                <ViewTab $w={86}>Courts</ViewTab>
              </ViewTabs>
              <Chips>
                {chips.map(c => (
                  <Chip key={c.label} $bg={c.bg} $fg={c.fg}>
                    <ChipDot $c={c.dot} />
                    {c.label}
                  </Chip>
                ))}
              </Chips>
            </FilterRow>
            <CalendarBody>
              <GridArea>
                <GridTrack>
                  {hours.map(h => (
                    <TimeRow key={h}>
                      <TimeLabel>{h}</TimeLabel>
                      <Slot />
                    </TimeRow>
                  ))}
                </GridTrack>
                <EventCard $tone="blue">
                  <EventTop>
                    <EventTitle $tone="blue">Afternoon Open Play - Beginner (DUPR 2.5-3.0) - Beginner</EventTitle>
                    <EventTag $tone="blue">dupr open play</EventTag>
                  </EventTop>
                  <EventTime>12:00 PM - 02:00 PM</EventTime>
                  <EventPlayers>0/20 players</EventPlayers>
                </EventCard>
                <EventCard $tone="lime">
                  <EventTop>
                    <EventTitle $tone="lime">Afternoon Open Play - Beginner (DUPR 2.5-3.0)</EventTitle>
                    <EventTag $tone="lime">open play</EventTag>
                  </EventTop>
                  <EventTime>12:00 PM - 02:00 PM</EventTime>
                  <EventPlayers>0 players</EventPlayers>
                </EventCard>
                <GridScroll />
              </GridArea>
              <SummaryPanel>
                <SummaryTitle>Day Summary</SummaryTitle>
                <StatList>
                  {stats.map(s => (
                    <StatCard key={s.label}>
                      <MutedSmall>{s.label}</MutedSmall>
                      <StatValue $lime={s.lime}>{s.value}</StatValue>
                    </StatCard>
                  ))}
                </StatList>
                <Divider />
                <TypeTitle>Events by Type</TypeTitle>
                <TypeRow>
                  <TypePill $bg="#06202c" $fg="#0ea5e9">dupr_open_play</TypePill>
                  1
                </TypeRow>
                <TypeRow>
                  <TypePill $bg="#1a2a00" $fg="#a3e600">open_play</TypePill>
                  1
                </TypeRow>
              </SummaryPanel>
            </CalendarBody>
          </CalendarPanel>

          <NextBadge><NextLogo /></NextBadge>
          <PageScroll />
        </Viewport>
      </Body>

      <Dock>
        {dockIcons.map(renderDock)}
        <DockSeparator />
        {dockExtras.map(renderDock)}
      </Dock>
    </Screen>
  )
}

export default App
